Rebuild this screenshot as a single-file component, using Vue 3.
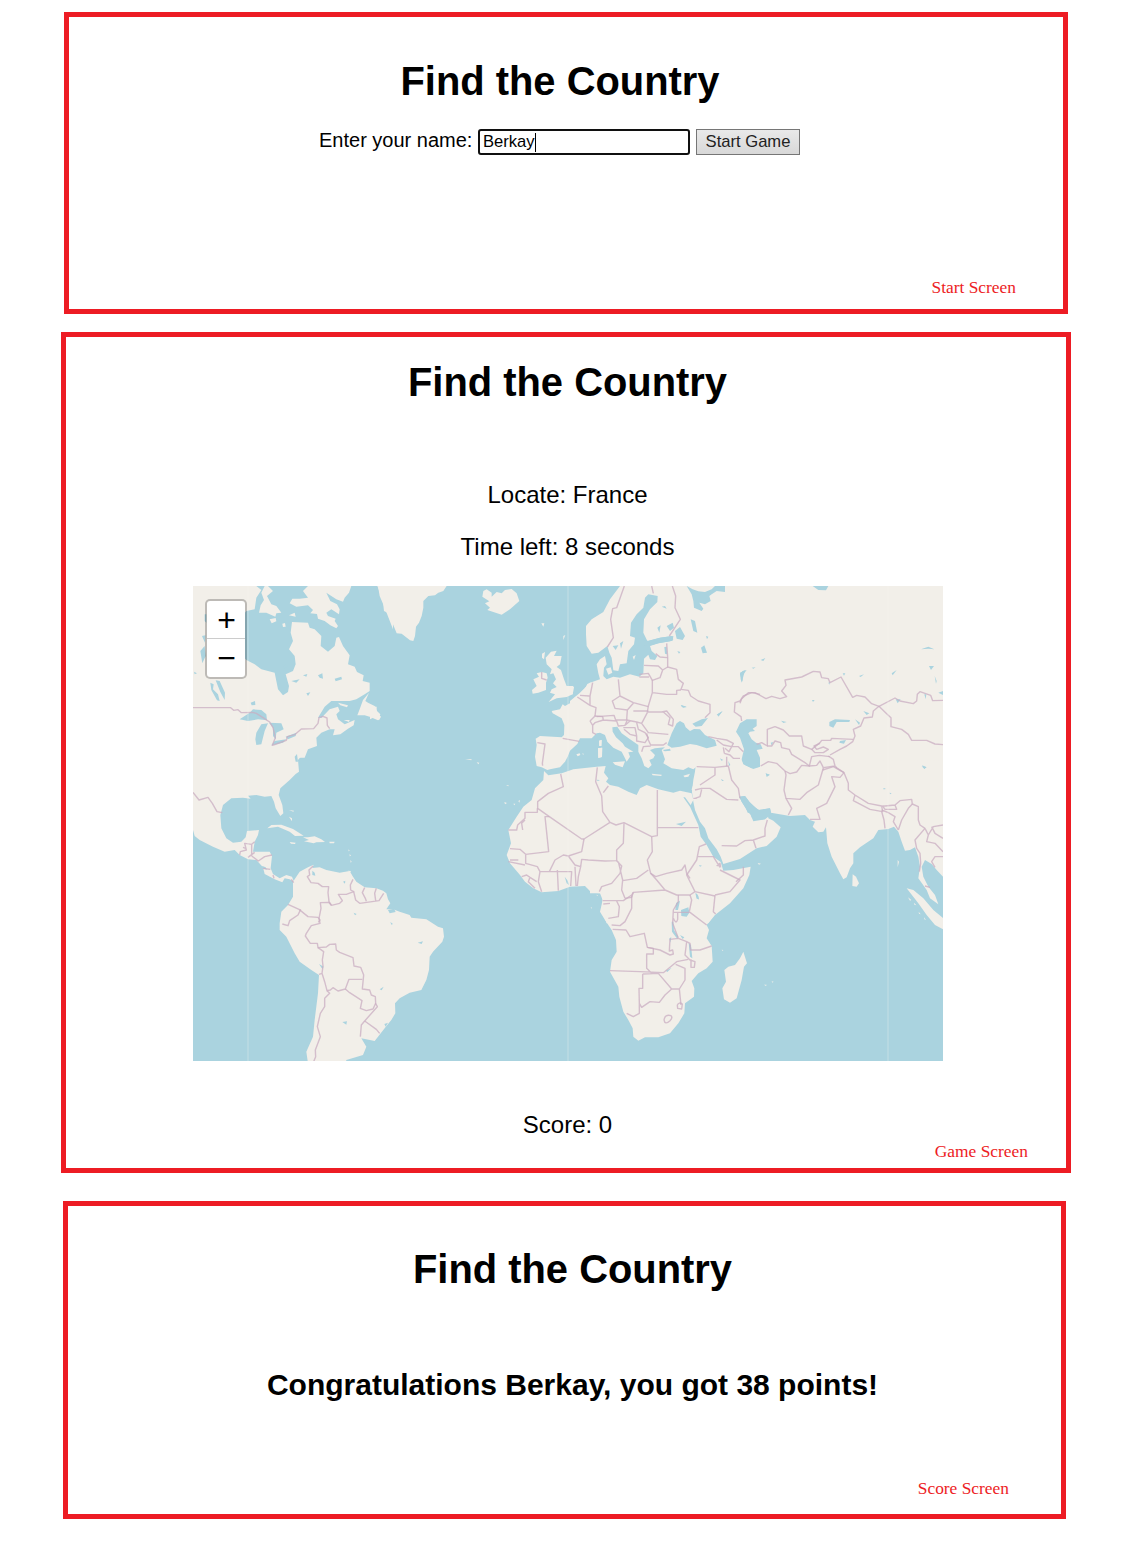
<script setup>
import { ref } from 'vue'

const player = ref('Berkay')

// Each region keeps its own origin; coordinates inside are in thirds of a map pixel.
const regions = [
  {
    name: 'canada', x: 0, y: 0,
    land: [
      'M0 0H190L205 12 190 35 185 70 160 75 140 100 120 180 160 222 185 235 205 250 245 260 250 285 255 310 270 328 285 318 288 300 278 265 300 255 308 235 305 210 288 190 300 165 293 140 297 108 345 110 350 125 365 130 385 150 383 180 405 197 425 180 430 155 438 153 450 180 470 208 465 235 485 242 492 258 512 268 509 285 530 290 530 315 515 325 490 340 470 345 415 345 395 362 375 395 385 396 410 370 435 362 440 375 430 385 435 400 455 415 485 402 482 418 465 428 442 445 420 448 425 430 410 430 385 440 370 455 372 480 345 490 335 515H0Z',
      'M528 320L517 345 525 350 545 360 552 375 562 385 555 403 530 392 515 388 493 388 500 370 510 342Z',
      'M345 0L330 15 345 35 320 38 298 38 290 52 310 62 345 58 360 72 352 82 372 84 375 98 395 105 412 118 430 127 435 120 425 105 428 98 405 90 400 80 415 70 438 85 440 70 432 55 412 45 400 20 430 40 450 47 455 35 468 20 475 0Z',
      'M225 0L240 15 222 30 235 55 250 60 265 80 250 82 247 92 220 80 198 80 203 58 213 42 205 20 215 0Z',
      'M230 100L248 96 250 106 236 112ZM268 113L276 111 278 122 270 123ZM288 88L305 80 308 92ZM435 350L465 358 462 364 442 358ZM452 402L470 402 468 408Z',
      'M555 0L560 30 575 65 600 130V0Z'
    ],
    water: [
      'M140 400L170 380 180 370 205 372 220 385 222 403 195 400 165 405Z',
      'M190 440L205 415 225 412 215 435 205 475 190 477 187 460Z',
      'M228 410L265 412 272 430 250 440 248 460 240 450 240 425Z',
      'M235 478L245 465 280 460 270 470ZM278 452L310 440 308 450 285 460Z',
      'M68 283L80 285 96 320 95 342 82 318ZM52 290L62 295 60 310 75 325 80 345 72 343 55 312ZM22 195L35 180 38 210 28 232ZM3 257L12 262 5 265ZM35 85L40 85V110L35 105ZM27 150L37 148 36 170ZM173 350L186 345 187 357 176 358Z',
      'M375 268L388 262 390 278 380 275ZM425 278L445 272 447 280 428 286ZM295 285L320 280 310 290ZM330 268L343 264 340 272ZM340 322L352 319 345 330ZM270 240L283 232 285 242 275 247ZM395 150L402 150 402 157Z'
    ],
    border: ['M0 365H113L122 373 135 371 145 380 178 379 190 382 210 395 230 408 240 425 247 455 238 478 250 474 280 463 283 452 305 446 325 429 362 428 375 412 378 395 390 391 402 396 403 418 410 428']
  },
  {
    name: 'mexico', x: 0, y: 492,
    land: [
      'M0 -10H340V0L328 15 315 30 318 65 308 72 290 90 262 115 257 135 268 165 271 190 262 198 248 175 243 155 235 138 215 140 190 135 165 137 173 146 150 143 115 145 90 165 82 195 85 235 100 265 120 278 145 275 158 262 162 243 198 240 195 255 185 275 180 305 230 305 237 318 233 355 240 372 260 385 280 375 297 380 303 395 290 388 275 385 268 397 245 388 215 372 210 352 190 330 165 328 140 315 125 300 95 305 60 290 20 270 5 258 0 240Z',
      'M223 235L235 225 265 224 300 237 332 257 306 258 290 245 255 230Z',
      'M330 262H345L365 259 385 268 396 276 370 277 362 280 333 274 348 270Z',
      'M290 276L308 278 306 282 294 281ZM409 275H425L423 280H410ZM288 200L297 205 297 214ZM288 180L303 182 301 185Z',
      'M466 298l4 4-3 2zM470 312l4 5-4 2zM472 330l4 5-3 3zM464 362l10 1-2 4z'
    ],
    water: ['M305 20L312 12 315 35 308 35ZM206 347L218 352 222 359 212 356Z'],
    border: [
      'M0 127L18 150 45 142 58 160 72 185 88 188',
      'M185 275L176 283 155 280 160 300 142 305 140 315M150 292L158 295M176 283L176 318M165 322L185 307M176 318L196 333 215 320 237 315M210 355L232 358M240 375L243 385M295 388L302 398'
    ]
  },
  {
    name: 'south-america', x: 0, y: 822,
    land: ['M300 65L320 35 345 22 362 14 358 24 380 22 400 30 440 38 470 33 480 50 490 65 515 82 550 85 570 92 580 100 585 118 592 130 580 148 600 148 620 155 650 165 655 173 700 178 735 200 750 205 753 230 748 245 720 275 710 290 708 330 700 360 685 390 650 398 620 415 606 430 607 460 595 480 575 505 555 530 545 543 505 535 520 560 510 585 460 600 458 610H345L340 575 360 530 365 480 375 400 378 345 355 330 320 305 305 280 280 230 260 210 260 190 265 155 285 135 300 110Z'],
    water: ['M358 32L365 38 367 47 358 45ZM378 312L392 320 388 327ZM448 486L462 484 460 494ZM450 65L457 62 456 71ZM674 248L690 244 686 252ZM592 186L600 192 595 194ZM560 388L572 380 566 391ZM482 158L491 162 486 166ZM585 150L603 146 608 156 590 160ZM574 492L585 488 578 500Z'],
    border: [
      'M360 18L348 30 350 45 343 50 354 68 375 70 388 80H407L405 98 408 125 415 135',
      'M285 133L318 148 345 170 375 172 381 180 376 187',
      'M323 148L315 165 290 182 285 197 268 192',
      'M480 58L472 75 473 90 482 95 460 103 436 103 448 122 440 130 415 136 407 127 382 128 384 145 378 175 381 190 355 197 340 220 337 228 352 250 373 250 375 263 400 261 410 253 428 252 430 270 440 277 480 293 483 318 503 322 512 345 508 387 530 390 535 405 547 410 548 430 553 440 515 483 505 495 502 530',
      'M515 83L508 98 517 115 520 124M550 85L545 100 548 122M572 100L558 122 500 130 488 120 482 95',
      'M375 263L392 275 388 300 390 318 387 340 378 343M387 340L395 365 402 392 412 390 420 383 435 393 457 387 468 358H508',
      'M457 387L470 398 507 422 502 445 520 452 540 447 548 430M515 483L550 508 560 520',
      'M402 392L410 400 395 415 395 440 382 460 373 500 382 530 367 570 368 590 362 605'
    ]
  },
  {
    name: 'atlantic', x: 531, y: 0,
    land: [
      'M22 0L30 20 38 40 42 75 52 80 65 105 80 142 95 143 120 163 130 165 135 150 138 122 147 110 155 90 160 65 160 45 175 30 195 28 205 20 220 15 230 0Z',
      'M337 32L340 15 350 10 365 20 365 32 380 18 395 22 405 12 425 9 440 22 448 45 420 70 395 86 370 78 352 72 360 65 345 52 358 46Z',
      'M543 197L560 194 552 210 575 210 570 235 560 243 573 252 582 280 590 300 610 300 608 325 590 333 560 337 536 348 555 325 540 320 545 310 560 303 549 292 558 280 550 262 540 265 545 250 530 235 527 215Z',
      'M500 262L515 258 530 262 533 275 528 290 528 312 505 320 488 323 486 312 500 300 490 280 507 272Z',
      'M516 203L525 198 522 220 516 215ZM514 112h9l-3 10zM580 150l6-3-6 15z',
      'M0 360L20 362 20 380 33 392 27 403 12 394 0 400Z',
      'M688 464L695 462 694 480H688ZM684 487L697 485 696 512 685 516Z',
      'M619 505l10-3 2 5-8 4zM637 502l5 2-3 2zM408 598l8 0-1 3zM403 648l8 3-6 4zM430 653l6 0-3 5zM445 645l5-3-2 8zM285 519l20 1-1 3zM320 529l8 1-3 5z'
    ],
    water: [],
    border: ['M515 258L515 277 530 282']
  },
  {
    name: 'north-europe', x: 1131, y: 0,
    land: [
      'M150 0L120 40 100 78 65 100 48 120 48 145 50 180 65 203 85 200 112 180 118 200 125 215 130 253 145 255 150 235 170 232 175 195 192 175 195 155 180 150 183 110 200 85 220 65 225 35 235 25 263 30 262 48 240 70 222 100 220 140 232 165 270 155 305 150 310 160 300 166 265 172 240 180 245 195 262 210 255 222 240 220 235 206 222 218 220 262 208 272 180 265 150 275 130 272 110 280 100 270 102 245 110 235 105 210 90 220 80 235 85 262 90 280 60 290 45 305 30 320 0 345V395H580V0Z',
      'M108 248L122 244 127 260 115 266ZM188 212L197 207 192 222ZM0 300L12 303 10 315 8 325H0Z'
    ],
    water: [
      'M350 0L368 10 385 16 405 18 425 10 435 0H465V18L440 15 425 25 418 30 422 45 405 55 388 50 400 68 395 75 372 65 370 45 365 25Z',
      'M195 155L235 165 270 155 310 150 308 164 265 172 235 180 200 178Z',
      'M315 135L330 123 345 150 338 162 320 158ZM362 100L375 105 382 140 370 135ZM393 185L403 178 411 200 398 202ZM283 183L290 182 291 205 285 203ZM128 180L145 178 137 192ZM150 172L160 165 153 188ZM290 120L308 110 312 125 300 135ZM275 62L285 60 290 68ZM262 125L272 118 268 140ZM510 260L525 253 515 290 512 280ZM545 245L557 244 550 248ZM333 357L350 362 340 365ZM442 385L457 376 445 392ZM322 195L331 198 327 203ZM408 150L415 152 411 160Z'
    ],
    border: [
      'M163 0L140 65 128 68 122 100 130 155 112 183M245 0L250 22M307 0L317 30 315 65 331 100 298 150',
      'M290 172L293 215 293 243 320 250 325 280 340 292 333 310 355 313 362 330 385 345 420 355 420 380 405 395',
      'M257 203L270 213 292 215M222 238L265 240 278 252 293 243M278 252L270 275 247 283 235 262 208 265M208 273L237 273',
      'M247 283L247 320 290 325 320 325 320 313 333 312M247 320L235 360 232 378 275 378 290 375 310 400 308 420 295 415 300 395 280 378',
      'M145 280L150 330 190 350 235 362M150 330L127 345 135 367 172 372 190 352M172 372L170 402 137 402 132 388 80 392M190 375L235 375',
      'M68 290L60 330 60 358 78 365 75 390M22 333L60 358M30 328L58 330',
      'M60 405L75 390 98 392 100 402 75 410 68 418 60 405M68 418L68 440 78 445M100 402L140 405 145 420 165 418 172 402M170 402L200 408 215 412 232 380M160 425L195 425 200 450 180 445 162 430M200 410L205 430 225 440 235 455 225 470 200 465 200 450M215 412L235 440 295 445M165 418L180 405',
      'M515 405L513 392 493 378 495 350 510 345 520 330 545 320 570 325'
    ]
  },
  {
    name: 'mediterranean', x: 1011, y: 282,
    land: [
      'M65 93L90 88 98 73 105 78 120 70 135 52 160 35 172 12 180 8H665V342H489L485 328 495 300 497 262 490 268 475 262 460 270 425 265 400 250 405 238 395 210 405 202 375 205 360 210 375 225 370 235 358 240 365 255 355 265 343 258 335 235 325 215 325 195 300 178 275 160 262 140 247 142 248 155 258 172 278 190 285 200 310 215 295 217 300 230 290 245 285 235 275 215 250 203 232 185 225 165 210 158 200 160 185 175 150 175 142 192 120 212 113 230 105 245 90 262 60 268 52 270 35 262 20 258 15 230 20 195 17 176 30 168 95 172 102 165 103 135 95 115 68 100Z',
      'M248 247L285 244 278 262 255 254ZM207 182L215 180 214 198H208ZM204 205L216 203 215 232 205 233ZM365 281L395 284 394 288 368 286ZM460 287L480 281 475 290 464 292Z'
    ],
    water: [
      'M412 195L425 160 440 130 450 123 462 130 467 142 480 153 492 147 510 148 525 165 555 180 560 197 530 205 500 195 480 192 450 200 425 203Z',
      'M487 131L515 118 534 114 515 138 497 140ZM398 210L420 206 422 212 404 214Z',
      'M570 235L580 240 574 242ZM595 243L601 255 597 258ZM198 299L210 300 204 303ZM560 104L578 93 566 108ZM452 75L470 82 456 82ZM573 296L582 302 576 303Z'
    ],
    border: [
      'M98 175L148 184M22 188L45 192 37 250 38 257',
      'M535 170L560 175 590 180 610 190 605 200 625 200 640 215M560 180L580 195 605 200 597 215 585 205M583 220L600 225 610 235 630 235M583 220L580 202M590 230V258',
      'M350 160L355 180 362 195 400 195 410 188M335 215L340 200 362 198'
    ]
  },
  {
    name: 'central-asia', x: 1641, y: 0,
    land: ['M-20 -5H620V620H-20Z'],
    water: [
      'M-12 437L0 412 20 400 50 400 50 420 38 428 45 435 30 437 25 442 35 460 48 470 62 475 68 488 50 492 60 515 60 542 40 549 10 535 5 520 12 490 0 455Z',
      'M218 0H265L258 13 235 12ZM268 420L268 408 285 400 330 402 328 408 290 408 280 425ZM345 400L360 410 357 417ZM300 465L318 462 312 473 298 470ZM370 375L388 382 380 387ZM123 404L140 408 130 411ZM467 340L482 340 473 352ZM595 320L609 315V327ZM553 325L559 325 557 340ZM567 240L582 240 573 252ZM77 562L90 566 80 573ZM546 538L559 543 553 549ZM92 470L100 468 95 478ZM265 290L270 288 268 296ZM216 342L224 342 219 348ZM308 262L316 262 312 269ZM357 270L372 265 362 273Z',
      'M543 190L565 182 583 190 565 188ZM584 270L590 285 588 293ZM0 265L8 255 20 252 8 268 8 288ZM455 262L470 252 458 268ZM62 222L76 216 70 225Z'
    ],
    border: [
      'M0 352L5 338 25 320 45 320 78 338 95 331 120 338 140 332 125 315 138 298 135 282 185 273 220 256 240 258 245 275 265 278 270 290 303 273 338 334 350 328 375 333 395 353 417 361',
      'M417 361L465 336 480 345 520 353 530 345 532 325 540 317 572 328 578 344 609 343',
      'M417 361L440 383 453 395 453 422 485 430 505 445 515 463 560 463 585 474 609 476',
      'M417 361L400 375 397 393 372 396 362 420 340 430 345 450 338 467 320 480 300 490 270 507',
      'M50 475L65 470 82 480 82 430 105 422 130 432 148 450 185 450 190 480 215 490 240 470 245 463 272 463 275 457 340 460',
      'M82 480L95 480 105 465 122 470 125 485 148 490 155 505 195 530 208 540 215 512 238 508 270 512',
      'M215 490L225 500 250 500 265 490 250 483 230 490 222 480 240 472M208 540L185 538 170 558 150 563 135 555 110 532 85 527 62 540M208 540L230 538 240 525 250 545 285 540 290 545M265 510L280 520 285 540'
    ]
  },
  {
    name: 'north-africa', x: 921, y: 522,
    land: [
      'M132 33L145 46 185 40 220 28 290 20 317 18 312 38 325 55 318 65 330 75 355 80 385 95 410 105 420 85 440 75 475 88 520 98 540 92 575 100 580 120 572 135 555 112 550 112 570 140 595 195 602 230 620 255 640 290 662 306 670 332 700 330 752 320 748 345 730 385 690 430 645 465 625 490H320L305 450 308 420 300 400 275 398 255 378 210 380 175 393 125 397 100 385 75 365 60 345 30 310 20 285 33 250 25 210 50 170 70 140 95 120 105 85 130 60Z'
    ],
    water: ['M538 190L558 185 545 198 528 192ZM597 315L606 317 600 320ZM586 400L592 403 597 417 590 416ZM194 350L203 362 207 375 200 370ZM528 430L540 422 534 450H526Z'],
    border: [
      'M182 42L190 80 145 100 113 125V145L148 170 245 237H252L330 187 308 155 305 108 287 65 292 22M310 98L325 78M330 187L348 195 372 188 455 230 472 227V90M472 203H595',
      'M25 210L50 210 53 195 75 175V157H112V145M68 210L65 190 75 180M148 170H135L146 275 77 283 60 268 30 266M455 230L457 275 442 300 452 340 467 350 500 340 545 330 555 315 560 340 570 355',
      'M372 190L370 250 350 270 350 302 315 303 265 300 245 298 242 320 225 315 205 288 190 285 165 300 148 335 120 335 112 320 77 310 77 285M205 288L245 275 252 237M148 335H215L212 378M172 330L175 392M225 320L228 378M242 320L235 350 232 378M120 335L115 365 125 395M110 365L90 352 80 345 65 350M30 300H55M25 305L75 315M90 352L85 365 105 385',
      'M350 302L365 318 360 340 335 370 305 380 298 395M355 305L368 360 365 390 375 415M368 362L410 355 445 330M452 340L470 360 495 390 400 397 395 412 375 415M495 390L530 405 570 405 585 395 560 345 590 300 598 260 618 252M590 290L640 290 660 322M650 318L660 310 662 322M660 330L720 360 690 395 645 405M585 395L645 408'
    ]
  },
  {
    name: 'south-africa', x: 1191, y: 882,
    land: [
      'M0 -20H465V0L450 25 420 60 380 95 350 135 357 150 350 175 365 198 368 245 350 265 325 280 305 303 313 325 312 350 285 370 283 400 265 430 240 460 205 472 165 472 145 482 130 470 128 445 115 420 100 395 88 350 85 320 60 275 65 240 80 215 78 180 65 150 45 120 30 95 38 60 35 40 0 40Z',
      'M460 215L471 250 462 260 455 300 440 355 420 368 402 358 397 325 408 305 403 270 415 260 435 255 450 235Z',
      'M522 314h8l-2 4zM545 304l6 1-4 3zM395 209l5 1-2 3zM2 83l4-1-2 4zM20 44l4 2-3 2z'
    ],
    water: ['M273 90L295 82 298 98 290 110 274 108ZM245 125L250 125 252 150 265 170 262 177 246 155ZM296 188L303 195 307 235 300 230ZM317 38L325 48 326 60 320 52ZM270 165L283 172 278 177ZM238 175L244 172 241 188ZM227 272L245 263 232 276ZM258 70L266 64 262 75Z'],
    border: [
      'M38 62H100L125 45 130 37M125 45L125 85 105 125 90 137 65 135M80 63L88 80 85 110 55 115M40 72L60 70',
      'M68 148L108 150 120 170 163 160 172 202 190 205V222H170L170 265 185 280M60 272L150 275 220 278 260 245 295 238M158 282V325L147 325 148 370 148 400 130 410 110 400M158 282L205 280 245 327H268L285 300 285 265 257 253M148 370L155 382 180 365 208 367 225 345 245 327M268 327L273 375',
      'M262 375Q267 365 277 372L275 387 263 385ZM222 420Q225 402 243 407Q249 413 240 422Q225 436 222 420',
      'M172 202L210 210 240 225 250 222 248 210 238 213 240 178 265 175 290 185 300 190 302 210 330 210 365 198M290 185L285 225 300 240 315 245 313 262 303 262V238M265 45V65L250 90 248 130 265 175M250 97H300L350 135M375 46L370 95 377 102M300 45L305 60 298 95M250 115Q258 135 263 118L263 98'
    ]
  },
  {
    name: 'south-asia', x: 1461, y: 522,
    land: [
      'M50 10L40 60 36 95 40 125 45 150 60 185 75 205 85 235 110 268 122 290 130 312 180 297 230 265 260 258 290 230 302 202 280 182 265 175 263 160 255 178 220 184 212 165 200 150 185 125 178 110 195 108 208 125 235 150 270 145 273 158 330 168 375 165 390 180 405 185 398 200 415 217 430 215 438 202 442 250 455 290 480 340 490 358 500 352 510 325 520 310 520 280 540 262 580 235 595 210 625 207 642 200 655 215 665 245 675 272 690 270 705 262 715 290 720 320 715 355 740 390 750 415 775 433 765 405 745 380 730 350 725 320 735 300 755 312 770 330 789 350V0Z',
      'M518 343L528 350 537 370 530 380 517 378Z',
      'M680 385L700 390 730 415 760 450 790 475V508L765 495 740 465 715 430Z',
      'M233 309L243 311 237 314ZM653 300L657 305 653 322ZM684 412l10 8-4 2zM702 428l7 8-6-2zM716 455l6 8-5-2zM732 472l6 8-5-2z'
    ],
    water: [
      'M178 110L195 108 208 125 220 140 238 150 270 145 273 158 268 168 255 178 228 180 215 172 212 160 203 158 198 145 185 125Z',
      'M185 0H240V20L215 25 195 15ZM257 41L267 43 262 48ZM725 19L740 22 733 26ZM610 85h6v3h-6zM629 98l6 2-5 3z'
    ],
    border: [
      'M45 90L65 85 90 85 140 118 175 120M50 20L105 22 145 18 155 60 175 85 180 115M105 22L105 45 60 75M45 115L60 110 65 88M40 115H50',
      'M125 257L170 258 195 242 220 240 255 228V205L262 180M220 240L228 265M190 320V345L168 365',
      'M315 33L318 45 312 90 318 115 360 118 380 98 415 75 430 24',
      'M318 115L335 145 325 165',
      'M428 30L460 20 492 38 480 52 455 50 465 80 440 130 410 145 420 178 390 178',
      'M492 38L505 70V90L525 105 565 130 605 138 608 155 570 148 520 122 525 105M492 38L468 22',
      'M608 138H615L645 135 650 148 615 148ZM645 135L660 122 695 118 697 132 715 140 715 180 720 195 735 205',
      'M605 155L612 180 615 205M605 150L625 158 645 170 640 185 655 210M655 210L665 180 685 145 697 132',
      'M735 205L705 240 710 265 720 280 722 310 718 335M735 205L745 225 740 245 765 250 789 275M745 225L760 200 789 195M755 200L765 220 789 235M789 290L765 290 755 305 765 322M735 378L750 382'
    ]
  }
]
</script>

<template>
  <main class="board">
    <section class="screen start">
      <h1>Find the Country</h1>
      <form class="entry" @submit.prevent>
        <label for="player">Enter your name:</label>
        <div class="field">
          <span id="player">{{ player }}</span><i class="caret"></i>
        </div>
        <button type="submit">Start Game</button>
      </form>
      <p class="caption">Start Screen</p>
    </section>

    <section class="screen game">
      <h1>Find the Country</h1>
      <p class="status locate">Locate: France</p>
      <p class="status time">Time left: 8 seconds</p>
      <div class="map">
        <svg viewBox="0 0 750 475" width="750" height="475" aria-label="World map">
          <rect width="750" height="475" fill="#aad3df" />
          <g transform="scale(0.333333)">
            <g v-for="r in regions" :key="r.name" :transform="`translate(${r.x} ${r.y})`" class="land">
              <path v-for="(d, i) in r.land" :key="i" :d="d" />
            </g>
            <g v-for="r in regions" :key="r.name" :transform="`translate(${r.x} ${r.y})`" class="water">
              <path v-for="(d, i) in r.water" :key="i" :d="d" />
            </g>
            <g v-for="r in regions" :key="r.name" :transform="`translate(${r.x} ${r.y})`" class="border">
              <path v-for="(d, i) in r.border" :key="i" :d="d" />
            </g>
          </g>
          <path class="seam" d="M55 0V475M375 0V475M695 0V475" />
        </svg>
        <div class="zoom">
          <span>+</span>
          <span>−</span>
        </div>
      </div>
      <p class="status score">Score: 0</p>
      <p class="caption">Game Screen</p>
    </section>

    <section class="screen result">
      <h1>Find the Country</h1>
      <h2>Congratulations Berkay, you got 38 points!</h2>
      <p class="caption">Score Screen</p>
    </section>
  </main>
</template>

<style>
body {
  margin: 0;
  background: #fff;
}
</style>

<style scoped>
.board {
  box-sizing: border-box;
  width: 1131px;
  height: 1558px;
  padding-top: 12px;
  font-family: "Liberation Sans", Arial, sans-serif;
  color: #000;
}
.screen {
  box-sizing: border-box;
  display: flex;
  flex-direction: column;
  align-items: center;
  border: 5px solid #ed1c24;
}
.start {
  width: 1004px;
  height: 302px;
  margin-left: 64px;
  padding: 41px 12px 0 0;
}
.game {
  width: 1010px;
  height: 841px;
  margin: 18px 0 0 61px;
  padding: 22px 0 0 3px;
}
.result {
  width: 1003px;
  height: 318px;
  margin: 28px 0 0 63px;
  padding: 40px 0 0 16px;
}
h1 {
  margin: 0;
  font-size: 39.9px;
  line-height: 46px;
}
h2 {
  margin: 76px 0 0;
  font-size: 30px;
  line-height: 34px;
}
.entry {
  display: flex;
  margin-top: 25px;
}
label {
  width: 153px;
  margin-left: -1px;
  margin-right: 6px;
  font-size: 20px;
  line-height: 22px;
  white-space: nowrap;
}
.field {
  box-sizing: border-box;
  display: flex;
  align-items: center;
  width: 212px;
  height: 26px;
  margin-right: 6px;
  padding-left: 3px;
  border: 2px solid #101010;
  border-radius: 3px;
  font-size: 16.6px;
}
.caret {
  width: 1px;
  height: 19px;
  background: #000;
}
button {
  box-sizing: border-box;
  width: 104px;
  height: 26px;
  padding: 0;
  border: 1px solid #767676;
  border-radius: 0;
  background: linear-gradient(#e9e9e9, #d8d8d8);
  color: #222;
  font: 16.6px "Liberation Sans", Arial, sans-serif;
}
.status {
  margin: 0;
  font-size: 24px;
  line-height: 28px;
}
.locate {
  margin-top: 76px;
}
.time {
  margin-top: 24px;
}
.score {
  margin-top: 50px;
}
.caption {
  align-self: flex-end;
  margin: 0;
  font: 17.4px/20px "Liberation Serif", "Times New Roman", serif;
  color: #ed1c24;
}
.start .caption {
  margin: 122px 35px 0 0;
}
.game .caption {
  margin: 2px 38px 0 0;
}
.result .caption {
  margin: 76px 52px 0 0;
}
.map {
  position: relative;
  width: 750px;
  height: 475px;
  margin-top: 25px;
}
.map svg {
  display: block;
}
.land {
  fill: #f2efe9;
}
.water {
  fill: #aad3df;
}
.border {
  fill: none;
  stroke: #c9aec2;
  stroke-opacity: 0.75;
  stroke-width: 4.2;
  stroke-linejoin: round;
}
.seam {
  stroke: #f7f7f4;
  stroke-opacity: 0.35;
}
.zoom {
  position: absolute;
  top: 13px;
  left: 12px;
  width: 38px;
  height: 76px;
  border: 2px solid rgba(0, 0, 0, 0.22);
  border-radius: 5px;
  background: #fff;
  background-clip: padding-box;
}
.zoom span {
  display: block;
  box-sizing: border-box;
  height: 38px;
  padding-left: 2px;
  font-size: 32px;
  line-height: 38px;
  text-align: center;
}
.zoom span:first-child {
  border-bottom: 1px solid #ccc;
}
</style>
